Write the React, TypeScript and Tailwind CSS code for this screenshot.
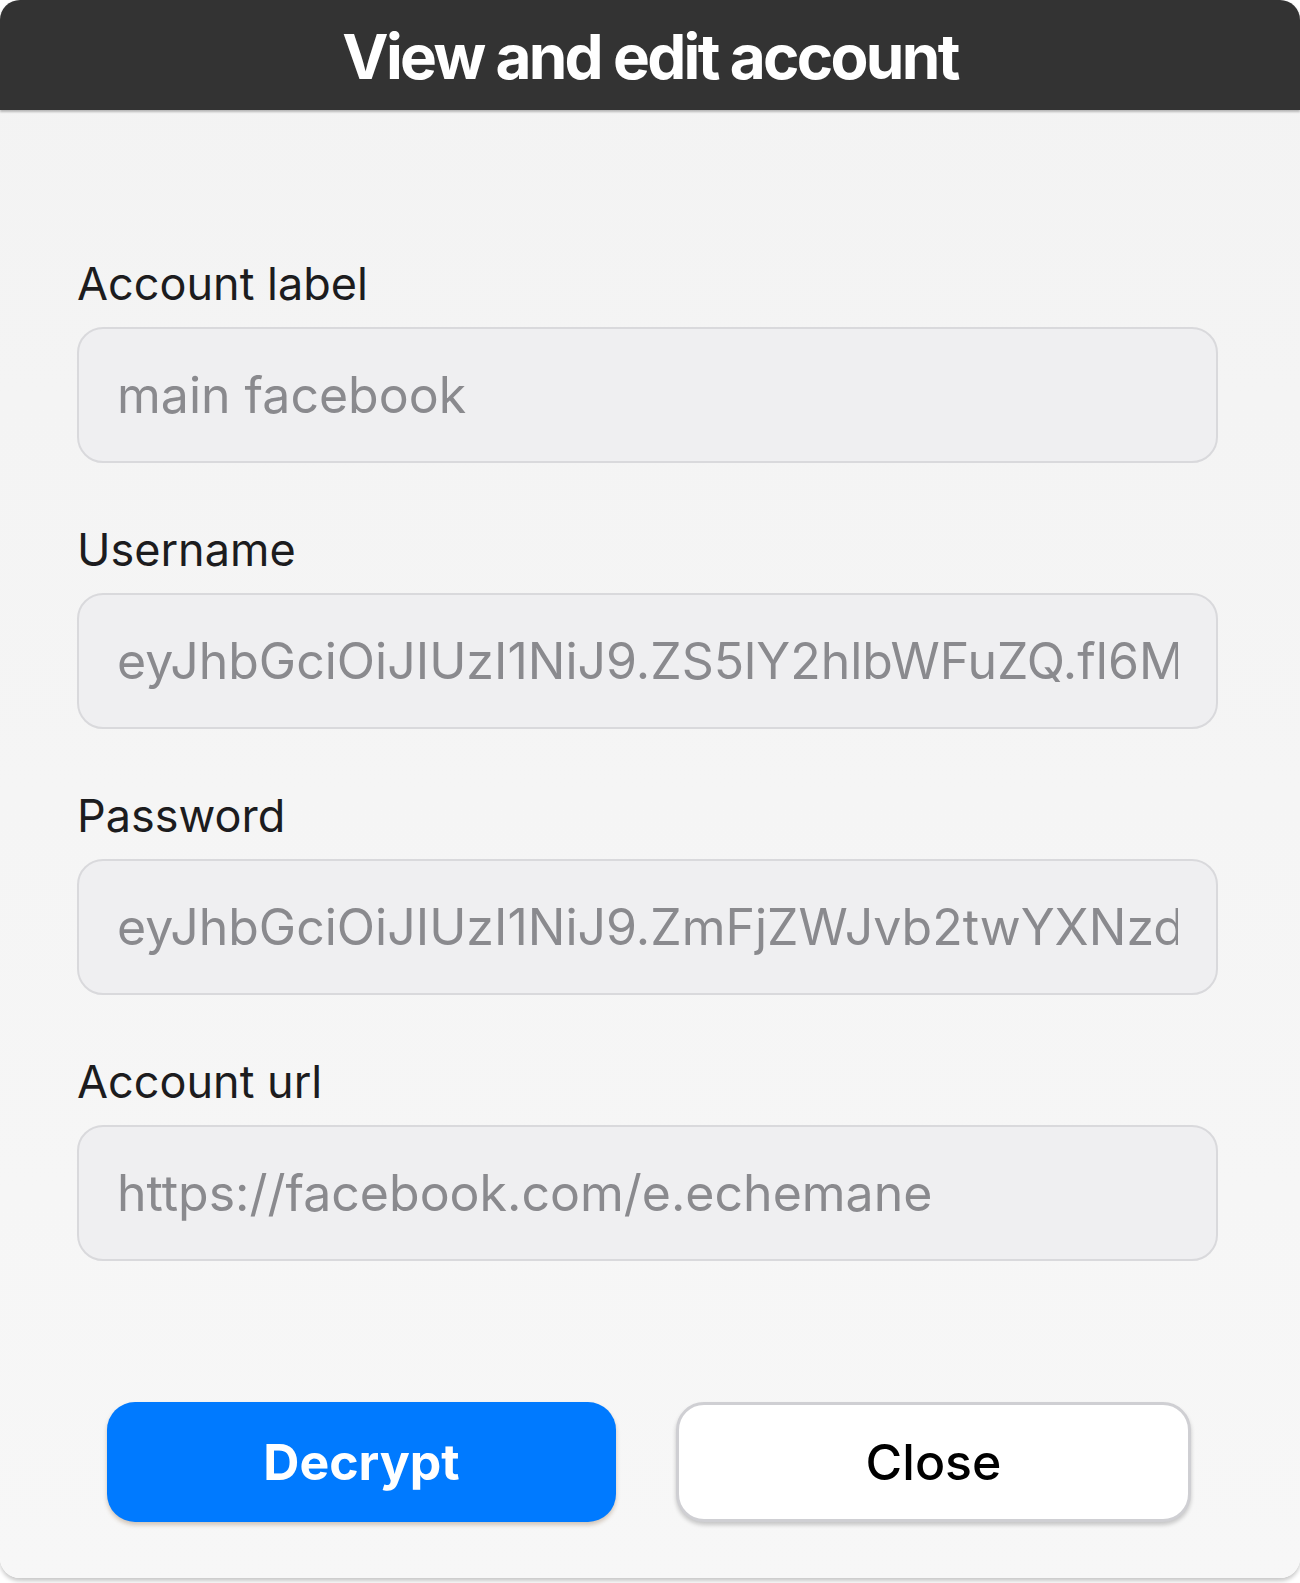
const fields = [
  { label: 'Account label', value: 'main facebook' },
  { label: 'Username', value: 'eyJhbGciOiJIUzI1NiJ9.ZS5lY2hlbWFuZQ.fl6MzQ1aXb8kLwR2vTn' },
  { label: 'Password', value: 'eyJhbGciOiJIUzI1NiJ9.ZmFjZWJvb2twYXNzd29yZA.Qk3pXr7' },
  { label: 'Account url', value: 'https://facebook.com/e.echemane' },
];

const Field = ({ label, value }: { label: string; value: string }) => {
  return (
    <div className="flex flex-col">
      <label className="text-[45px] leading-none text-[#1c1c1e]">{label}</label>
      <input
        readOnly
        value={value}
        className="mt-[21px] h-[136px] w-full rounded-[26px] border-2 border-[#d9d9dc] bg-[#efeff1] px-[38px] text-[50px] text-[#8a8a8e] outline-none"
        style={{ fontFamily: 'Inter, "Noto Sans", sans-serif' }}
      />
    </div>
  );
};

export default function App() {
  return (
    <div className="w-[1300px] h-[1583px] bg-white" style={{ fontFamily: 'Inter, "Noto Sans", sans-serif' }}>
      <div className="h-[1578px] rounded-[20px] bg-gradient-to-b from-[#f3f3f3] to-[#f7f7f7] shadow-[0_3px_4px_rgba(0,0,0,0.22)] overflow-hidden flex flex-col">
        <header className="h-[110px] shrink-0 bg-[#333333] flex items-center justify-center shadow-[0_2px_2px_rgba(0,0,0,0.25)]">
          <h1 className="text-[62px] leading-none font-bold text-white tracking-[-2.7px] mt-[4px]">
            View and edit account
          </h1>
        </header>

        <div className="pt-[151px] pl-[77px] pr-[82px] flex flex-col gap-[64px]">
          {fields.map((f) => (
            <Field key={f.label} label={f.label} value={f.value} />
          ))}
        </div>

        <div className="mt-[141px] pl-[107px] pr-[109px] flex gap-[60px]">
          <button className="flex-1 h-[120px] rounded-[28px] bg-[#007aff] text-white text-[50px] font-bold shadow-[0_3px_4px_rgba(120,80,40,0.3)]">
            Decrypt
          </button>
          <button className="flex-1 h-[120px] rounded-[28px] bg-white border-[3px] border-[#cfcfd3] text-black text-[50px] font-medium shadow-[0_3px_4px_rgba(0,0,0,0.2)]">
            Close
          </button>
        </div>
      </div>
    </div>
  );
}
